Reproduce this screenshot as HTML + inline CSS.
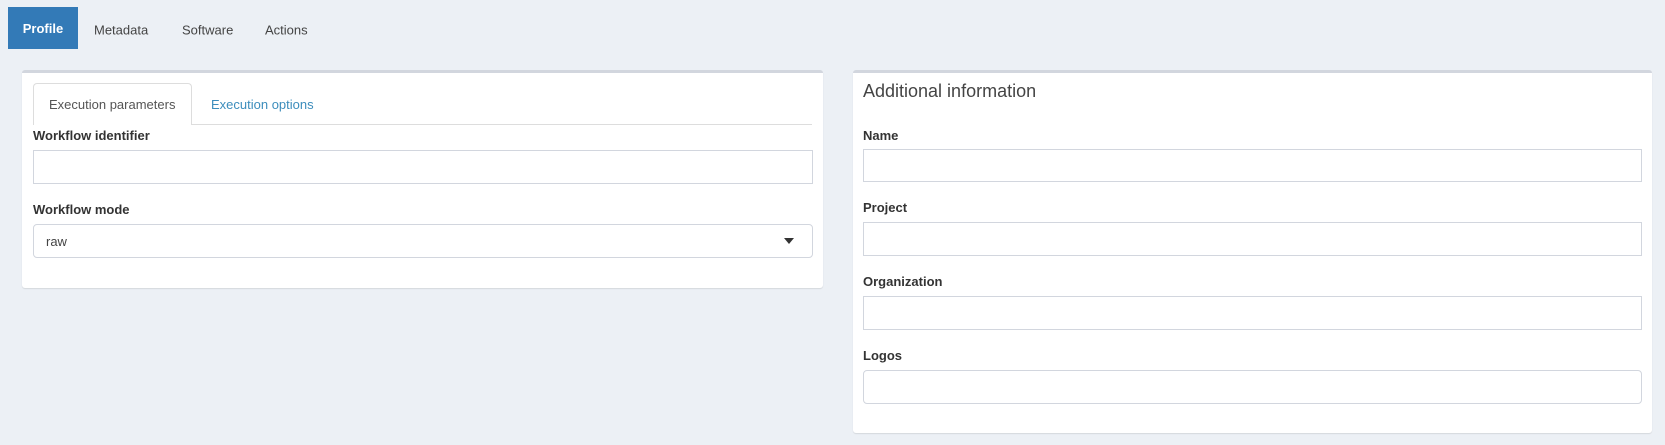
<!DOCTYPE html>
<html><head><meta charset="utf-8"><style>
*{box-sizing:border-box;margin:0;padding:0}
body{width:1665px;height:445px;background:#ecf0f5;font-family:"Liberation Sans",sans-serif;font-size:13px;color:#333;position:relative;overflow:hidden}
.a{position:absolute}
.nav{top:30px;font-size:13px;color:#444;line-height:1;transform:translateY(-50%)}
.prof{left:8px;top:7px;width:70px;height:42px;background:#337ab7;color:#fff;font-weight:bold;display:flex;align-items:center;justify-content:center;font-size:13px}
.box{background:#fff;border-top:3px solid #d2d6de;border-radius:3px;box-shadow:0 1px 1px rgba(0,0,0,.1)}
.inp{background:#fff;border:1px solid #d2d6de}
.lbl{font-weight:bold;font-size:13px;color:#333;line-height:1}
</style></head><body>
<div class="a prof">Profile</div>
<div class="a nav" style="left:94px">Metadata</div>
<div class="a nav" style="left:182px">Software</div>
<div class="a nav" style="left:265px">Actions</div>

<div class="a box" style="left:22px;top:70px;width:801px;height:218px"></div>
<div class="a" style="left:33px;top:124px;width:779px;height:1px;background:#ddd"></div>
<div class="a" style="left:33px;top:83px;width:159px;height:42px;background:#fff;border:1px solid #ddd;border-bottom:none;border-radius:4px 4px 0 0"></div>
<div class="a" style="left:49px;top:98px;color:#555;line-height:1">Execution parameters</div>
<div class="a" style="left:211px;top:98px;color:#3c8dbc;line-height:1">Execution options</div>
<div class="a lbl" style="left:33px;top:129px">Workflow identifier</div>
<div class="a inp" style="left:33px;top:150px;width:780px;height:34px"></div>
<div class="a lbl" style="left:33px;top:203px">Workflow mode</div>
<div class="a inp" style="left:33px;top:224px;width:780px;height:34px;border-radius:4px"></div>
<div class="a" style="left:46px;top:235px;line-height:1;color:#444">raw</div>
<div class="a" style="left:784px;top:238px;width:0;height:0;border-left:5px solid transparent;border-right:5px solid transparent;border-top:6px solid #333"></div>

<div class="a box" style="left:853px;top:70px;width:799px;height:363px"></div>
<div class="a" style="left:863px;top:82px;font-size:18px;color:#444;line-height:1">Additional information</div>
<div class="a lbl" style="left:863px;top:129px">Name</div>
<div class="a inp" style="left:863px;top:149px;width:779px;height:33px"></div>
<div class="a lbl" style="left:863px;top:201px">Project</div>
<div class="a inp" style="left:863px;top:222px;width:779px;height:34px"></div>
<div class="a lbl" style="left:863px;top:275px">Organization</div>
<div class="a inp" style="left:863px;top:296px;width:779px;height:34px"></div>
<div class="a lbl" style="left:863px;top:349px">Logos</div>
<div class="a inp" style="left:863px;top:370px;width:779px;height:34px;border-radius:4px"></div>
</body></html>
